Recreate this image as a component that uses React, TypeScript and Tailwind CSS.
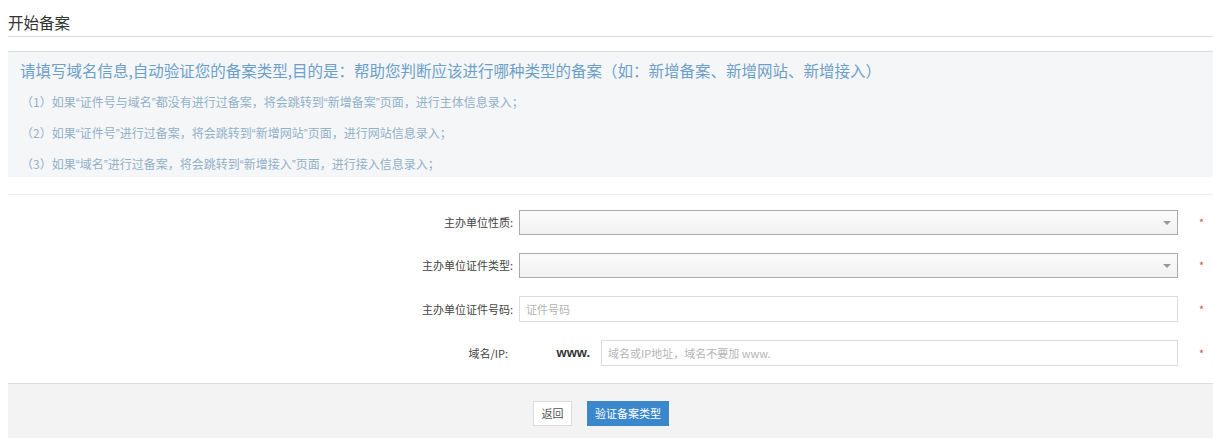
import React from "react";

const font = { fontFamily: '"Noto Sans CJK SC", "Noto Sans", sans-serif' };
const latin = { fontFamily: '"Liberation Sans", Arial, sans-serif' };

function Q({ c }: { c: string }) {
  return <span style={latin}>{c}</span>;
}

function Caret() {
  return (
    <svg width="8" height="4" viewBox="0 0 8 4" className="shrink-0">
      <path d="M0 0 L8 0 L4 4 Z" fill="#999" />
    </svg>
  );
}

function Star() {
  return <span className="ml-[21px] text-[11px] leading-none text-[#d9534f]">*</span>;
}

function Label({ children }: { children: React.ReactNode }) {
  return (
    <div className="w-[511px] shrink-0 pr-[6px] text-right text-[11px] text-[#444]">{children}</div>
  );
}

function SelectRow({ label }: { label: string }) {
  return (
    <div className="flex h-[25px] items-center">
      <Label>{label}</Label>
      <div className="flex h-[25px] w-[659px] items-center justify-end border border-[#aaa] bg-gradient-to-b from-[#fbfbfb] to-[#f2f2f2] pr-[6px]">
        <Caret />
      </div>
      <Star />
    </div>
  );
}

export default function App() {
  return (
    <div className="w-[1213px] bg-white pl-2" style={font}>
      <div className="flex h-[37px] items-center border-b border-[#ddd] pt-[10px] text-[15.5px] text-[#333]">
        开始备案
      </div>
      <div className="mt-[14px] h-[126px] border-t border-[#dcdcdc] bg-[#f5f6f7] pl-[12px]">
        <div className="pt-[7px] text-[15.5px] leading-[22px] text-[#6ca0cb]">
          请填写域名信息,自动验证您的备案类型,目的是：帮助您判断应该进行哪种类型的备案（如：新增备案、新增网站、新增接入）
        </div>
        <div className="mt-[12px] flex flex-col gap-[12px] pl-[1px] text-[12px] leading-[18px] text-[#93b1c9]">
          <div>
            （1）如果<Q c="“" />证件号与域名<Q c="”" />都没有进行过备案，将会跳转到<Q c="“" />新增备案<Q c="”" />页面，进行主体信息录入；
          </div>
          <div>
            （2）如果<Q c="“" />证件号<Q c="”" />进行过备案，将会跳转到<Q c="“" />新增网站<Q c="”" />页面，进行网站信息录入；
          </div>
          <div>
            （3）如果<Q c="“" />域名<Q c="”" />进行过备案，将会跳转到<Q c="“" />新增接入<Q c="”" />页面，进行接入信息录入；
          </div>
        </div>
      </div>
      <div className="mt-[17px] border-t border-[#f0f0f0]" />
      <div className="flex flex-col gap-[18px] pt-[15px]">
        <SelectRow label="主办单位性质:" />
        <SelectRow label="主办单位证件类型:" />
        <div className="flex h-[26px] items-center">
          <Label>主办单位证件号码:</Label>
          <div className="flex h-[26px] w-[659px] items-center border border-[#ddd] bg-white pl-[6px] text-[11px] text-[#b5b5b5]">
            证件号码
          </div>
          <Star />
        </div>
        <div className="flex h-[26px] items-center">
          <div className="w-[500px] shrink-0 text-right text-[11px] text-[#444]">域名/IP:</div>
          <div className="w-[93px] shrink-0 pr-[11px] text-right text-[13px] font-bold text-[#333]" style={latin}>
            www.
          </div>
          <div className="flex h-[26px] w-[577px] items-center border border-[#ddd] bg-white pl-[6px] text-[11px] text-[#b5b5b5]">
            域名或IP地址，域名不要加 www.
          </div>
          <Star />
        </div>
      </div>
      <div className="mt-[17px] flex h-[55px] items-start gap-[15px] border-t border-[#ddd] bg-[#f3f3f3] pl-[525px] pt-[17px]">
        <button className="flex h-[25px] w-[39px] items-center justify-center border border-[#ddd] bg-white text-[11px] text-[#555]">
          返回
        </button>
        <button className="flex h-[25px] w-[82px] items-center justify-center bg-[#3a87cc] text-[11px] text-white">
          验证备案类型
        </button>
      </div>
    </div>
  );
}
